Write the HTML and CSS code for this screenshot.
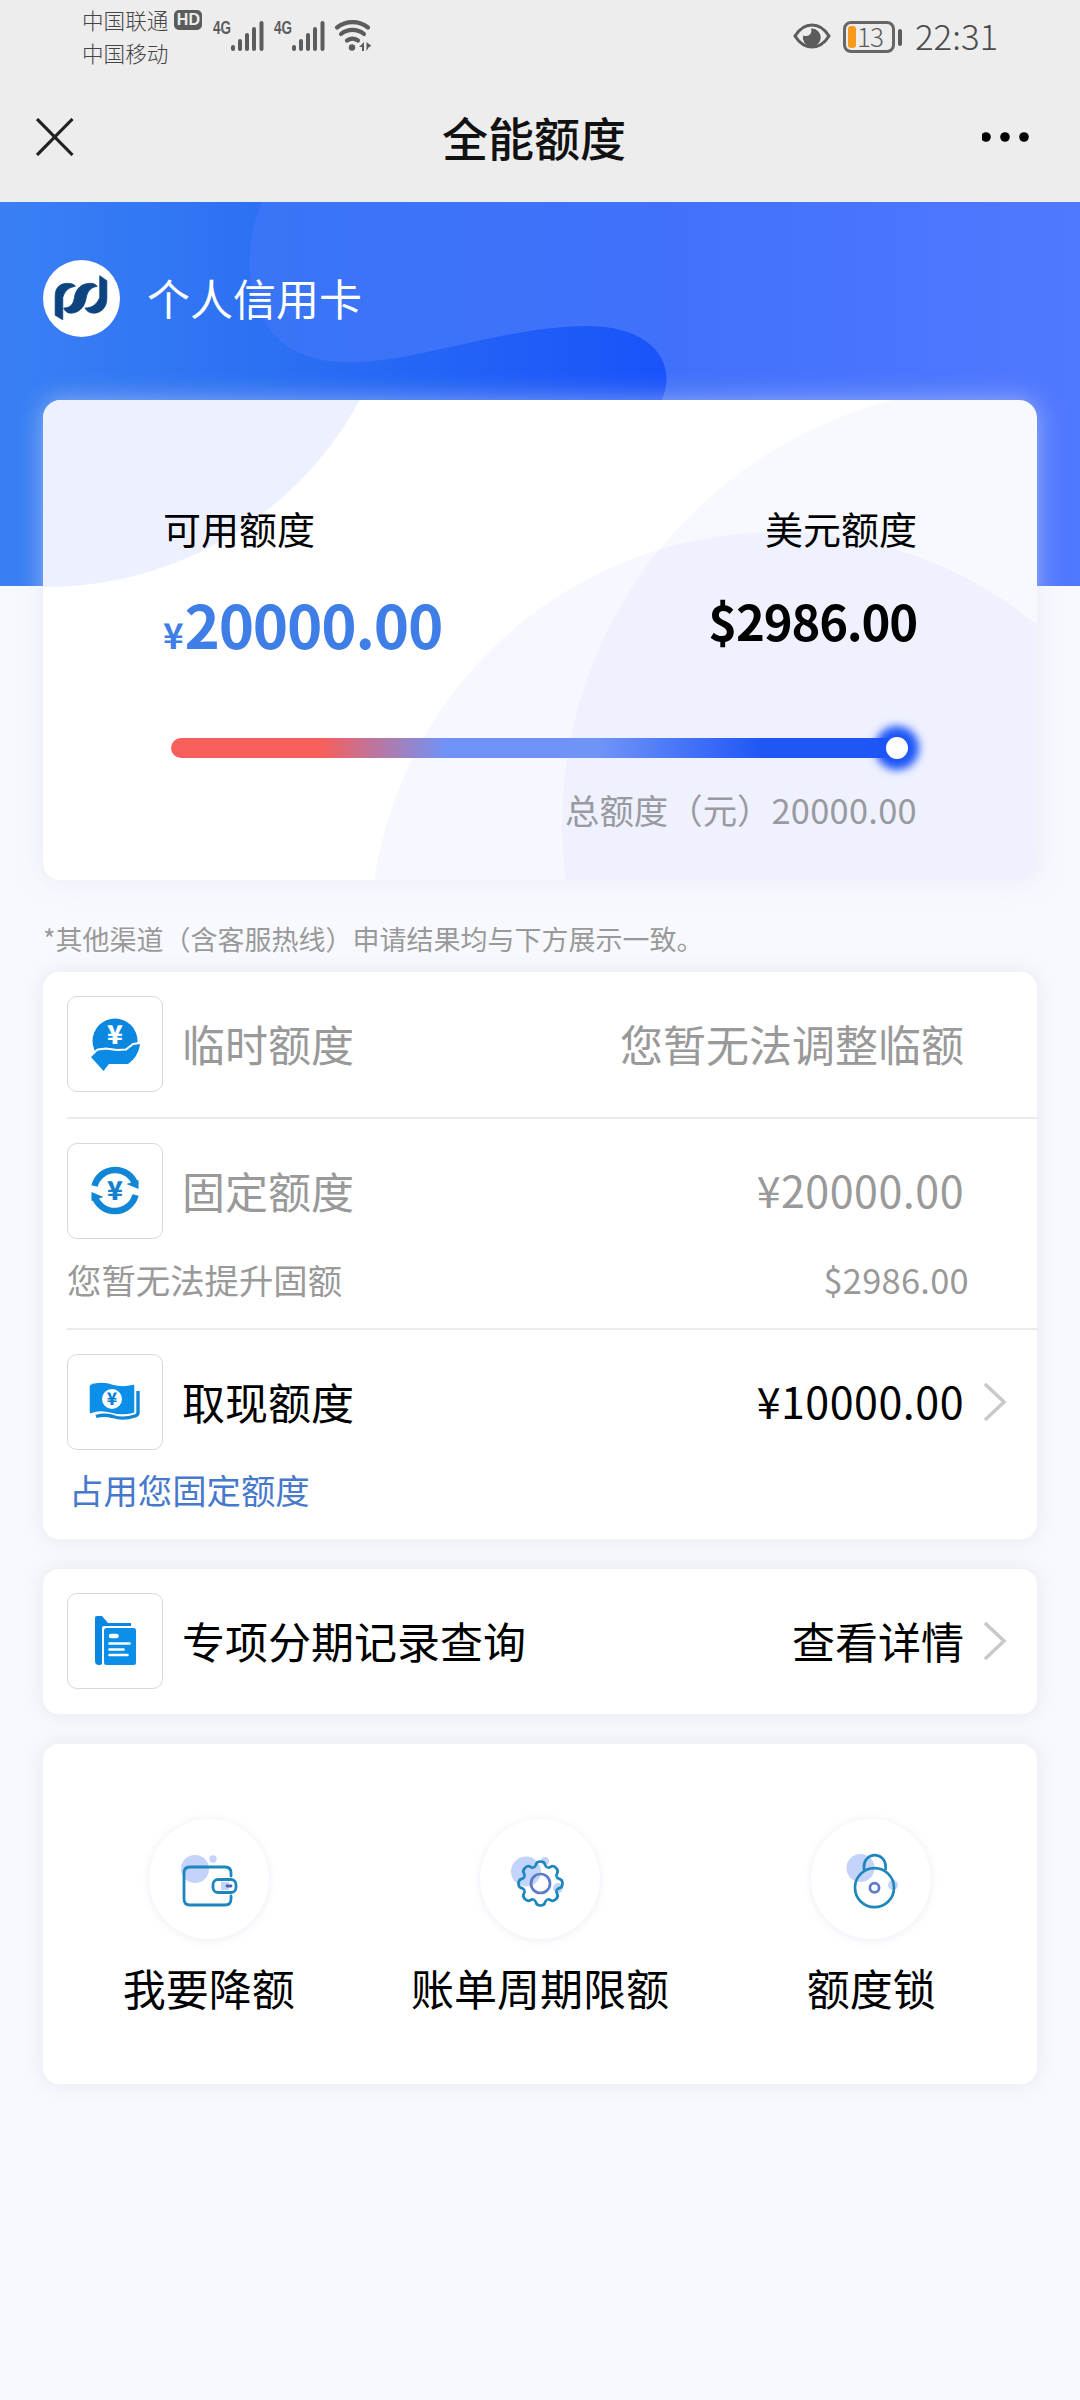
FILE: index.html
```html
<!DOCTYPE html>
<html lang="zh-CN">
<head>
<meta charset="utf-8">
<title>全能额度</title>
<link rel="stylesheet" href="styles.css">
</head>
<body>
<header class="top">
  <div class="status">
    <div class="carriers">
      <div class="carrier">中国联通<span class="hd">HD</span></div>
      <div class="carrier">中国移动</div>
    </div>
    <svg class="signal" width="162" height="36" viewBox="0 0 162 36">
      <g fill="#5c5c5c">
        <g id="sig">
          <text x="0" y="16" textLength="18" lengthAdjust="spacingAndGlyphs" class="net">4G</text>
          <g stroke="#5c5c5c" stroke-width="4" stroke-linecap="round">
            <path d="M20 31v-2M27 31v-8M34 31V17M41 31V11M48.500 31V5"/>
          </g>
        </g>
        <use href="#sig" x="61"/>
      </g>
      <g fill="none" stroke="#5c5c5c" stroke-width="4.200" stroke-linecap="round">
        <path d="M124 9.500a25 25 0 0 1 31 0"/>
        <path d="M128 16a18 18 0 0 1 23 0"/>
        <path d="M134 22.500a9.500 9.500 0 0 1 11 0"/>
      </g>
      <circle cx="139" cy="29.500" r="3.200" fill="#5c5c5c"/>
      <path d="M151 24v9h-2v-4l-3 0zM153.500 33v-9l5 4-2.500 1z" fill="#5c5c5c"/>
    </svg>
    <svg class="eye" width="40" height="30" viewBox="0 0 40 30">
      <path d="M3 15C8 7 14 4 20 4s12 3 17 11c-5 8-11 11-17 11S8 23 3 15z" fill="none" stroke="#5c5c5c" stroke-width="3"/>
      <path d="M19 7.500a9 9 0 1 1-8 7c4 2 10-1 8-7z" fill="#5c5c5c"/>
    </svg>
    <div class="battery"><span class="level"></span><span class="pct">13</span></div>
    <span class="tip"></span>
    <time class="clock">22:31</time>
  </div>
  <nav class="nav">
    <svg width="38" height="38" viewBox="0 0 38 38"><path d="M1 1l35.500 36M36.500 1L1 37" stroke="#222" stroke-width="3.200"/></svg>
    <h1 class="title">全能额度</h1>
    <svg width="48" height="12" viewBox="0 0 48 12"><circle cx="4" cy="6" r="4.800"/><circle cx="23" cy="6" r="4.800"/><circle cx="42" cy="6" r="4.800"/></svg>
  </nav>
</header>

<main>
  <section class="hero">
    <svg class="hero-wave" width="1080" height="384" viewBox="0 202 1080 384">
      <defs>
        <linearGradient id="wave" gradientUnits="userSpaceOnUse" x1="250" y1="0" x2="1080" y2="0">
          <stop offset="0" stop-color="#3975f6"/><stop offset=".5" stop-color="#4171fb"/><stop offset="1" stop-color="#5179ff"/>
        </linearGradient>
      </defs>
      <path d="M262 202C236 264 246 358 340 362 410 366 500 326 588 326 648 326 680 360 661 402V586h419V202z" fill="url(#wave)"/>
    </svg>
    <div class="brand">
      <svg width="77" height="77" viewBox="0 0 76 76">
        <circle cx="38" cy="38" r="38" fill="#fff"/>
        <g fill="#0d4480" stroke="#0d4480" stroke-width=".8" stroke-linejoin="round">
          <path d="M12 54.500V36C12 27 17 23 24 23c4 0 7 1 8 3-6 1-10.500 4-12.500 11v22z"/>
          <path d="M20.500 47.500C27 47 30 44 31 37 32.500 28 38 23 47 23c3 0 5 1 6.500 3-6 1-9.500 4-11 12C41 47 35 52.500 27 52.500c-3 0-5.500-2-6.500-5z"/>
          <path d="M41.500 47.500C49 47 53 44 56 37V15.500l7 5v17.500c0 9-6 14.500-13 14.500-4 0-7-2-8.500-5z"/>
        </g>
      </svg>
      <span>个人信用卡</span>
    </div>
    <div class="quota">
      <svg class="quota-bg" width="994" height="480" viewBox="43 400 994 480">
        <circle cx="46" cy="230" r="357" fill="#edf1ff"/>
        <circle cx="778" cy="940" r="408" fill="#5f78ff" fill-opacity=".06"/>
        <circle cx="1000" cy="825" r="438" fill="#5f78ff" fill-opacity=".042"/>
      </svg>
      <div class="amounts">
        <div class="amount"><span class="label">可用额度</span><strong class="cny"><small>¥</small>20000.00</strong></div>
        <div class="amount right"><span class="label">美元额度</span><strong class="usd">$2986.00</strong></div>
      </div>
      <div class="track"><span class="thumb"></span></div>
      <div class="total">总额度（元）<span class="fig">20000.00</span></div>
    </div>
  </section>

  <p class="note">*其他渠道（含客服热线）申请结果均与下方展示一致。</p>

  <section class="card">
    <div class="item muted">
      <div class="row">
        <span class="tile"><svg width="94" height="94" viewBox="1 1 94 94">
          <circle cx="48" cy="45" r="22.500" fill="#0b87e0"/>
          <path d="M24 61l7-6.500 8-1.500 11 1.500 9-.5 7-5.500 7-1c-.5 7-4 15-12 20.500H42L36.500 75z" fill="#0b8ae6"/>
          <path d="M26 57l5-3.500 8-1 11 1.500 9-.5 7-5.500 7-1" fill="none" stroke="#fff" stroke-width="2"/>
          <text x="48" y="48" class="yen yen-lg" fill="#fff">¥</text>
        </svg></span>
        <span class="name">临时额度</span><span class="value">您暂无法调整临额</span>
      </div>
    </div>
    <div class="item muted">
      <div class="row">
        <span class="tile"><svg width="94" height="94" viewBox="1 1 94 94">
          <g id="swap"><path d="M27.500 43A21.300 21.300 0 0 1 68.500 42" fill="none" stroke="#1186d6" stroke-width="6.500"/><path d="M59.500 41L71.500 46V37z" fill="#1186d6"/></g>
          <use href="#swap" transform="rotate(180 48 47.500)"/>
          <text x="48" y="57" class="yen yen-lg" fill="#1580cc">¥</text>
        </svg></span>
        <span class="name">固定额度</span><span class="value fig-lg">¥20000.00</span>
      </div>
      <div class="sub"><span>您暂无法提升固额</span><span class="fig">$2986.00</span></div>
    </div>
    <div class="item">
      <div class="row">
        <span class="tile"><svg width="94" height="94" viewBox="1 1 94 94">
          <path d="M23.500 32q2-2 5-2c8-1 13 0 17 1.500 7 2 13 2 21 0V58c-9 2.500-15 2-22 0-7-2-14-2.500-21 .5z" fill="#0b8fe8" stroke="#0b8fe8" stroke-width="1.500" stroke-linejoin="round"/>
          <path d="M71 37v22q0 2-3 3c-9 3-15 3-22 .5-7-2-11-2-17 0" fill="none" stroke="#1186d6" stroke-width="3.400"/>
          <circle cx="45" cy="45" r="10" fill="#fff"/>
          <text x="45" y="51" class="yen yen-sm" fill="#0b7fd6">¥</text>
        </svg></span>
        <span class="name">取现额度</span><span class="value fig-lg">¥10000.00</span>
        <svg class="chevron" width="24" height="40" viewBox="0 0 24 40"><path d="M2 2l19 18L2 38" fill="none" stroke="#c9c9c9" stroke-width="3.600"/></svg>
      </div>
      <a class="link">占用您固定额度</a>
    </div>
  </section>

  <section class="card">
    <div class="item">
      <div class="row">
        <span class="tile"><svg width="94" height="94" viewBox="1 1 94 94">
          <path d="M28 25q0-2 2-2h5l6 7h23v3H37q-2 0-2 2v35q0 2-3 2-4 0-4-4z" fill="#0a86e0"/>
          <rect x="37" y="35" width="32" height="37" rx="2.500" fill="#0b8fe8"/>
          <path d="M42.500 50.500h20M42.500 56.500h14M42.500 62h18" stroke="#fff" stroke-width="2.600" stroke-linecap="round"/>
          <path d="M44 43h5.500" stroke="#fff" stroke-width="4.500" stroke-linecap="round"/>
        </svg></span>
        <span class="name">专项分期记录查询</span><span class="value">查看详情</span>
        <svg class="chevron" width="24" height="40" viewBox="0 0 24 40"><path d="M2 2l19 18L2 38" fill="none" stroke="#c9c9c9" stroke-width="3.600"/></svg>
      </div>
    </div>
  </section>

  <section class="card tools">
    <div class="tool">
      <svg class="disc" width="120" height="120" viewBox="0 0 120 120" fill="none" stroke="#1c86bd" stroke-width="2.800" stroke-linecap="round">
        <g fill="#c3d3fa" stroke="none"><circle cx="46" cy="50" r="14"/><circle cx="64" cy="40" r="3.700"/></g>
        <path d="M82 57v-3q0-6-6-6H41q-6 0-6 6v26q0 6 6 6h35q6 0 6-6v-3"/>
        <rect x="64" y="60.500" width="23" height="13" rx="5"/>
        <path d="M72 63h8v8h-8z" fill="#c3d3fa" stroke="none"/>
        <path d="M78 67h4" stroke="#4a62b0"/>
      </svg>
      <span>我要降额</span>
    </div>
    <div class="tool">
      <svg class="disc" width="120" height="120" viewBox="0 0 120 120" fill="none" stroke="#1c86bd" stroke-width="2.700">
        <g fill="#c3d3fa" stroke="none"><circle cx="46" cy="52.500" r="15"/><circle cx="65" cy="42" r="4"/><circle cx="78" cy="69" r="5"/></g>
        <g transform="translate(60.500 64.500)">
          <path id="tooth" d="M-6.700-16.200Q-5-16.900-4.600-18.800-4-22 0-22 4-22 4.600-18.800 5-16.900 6.700-16.200"/>
          <use href="#tooth" transform="rotate(45)"/><use href="#tooth" transform="rotate(90)"/><use href="#tooth" transform="rotate(135)"/><use href="#tooth" transform="rotate(180)"/><use href="#tooth" transform="rotate(225)"/><use href="#tooth" transform="rotate(270)"/><use href="#tooth" transform="rotate(315)"/>
          <circle r="9.500" stroke="#5b7cc8"/>
        </g>
      </svg>
      <span>账单周期限额</span>
    </div>
    <div class="tool">
      <svg class="disc" width="120" height="120" viewBox="0 0 120 120" fill="none" stroke="#1c86bd" stroke-width="2.700">
        <g fill="#c3d3fa" stroke="none"><circle cx="49.500" cy="49" r="14"/><circle cx="82" cy="66" r="5"/></g>
        <circle cx="63.500" cy="68.700" r="19.500"/>
        <path d="M53 51v-4a10.800 10.800 0 0 1 21.600 0v4"/>
        <circle cx="63.500" cy="68.700" r="4.600" stroke="#5b7cc8"/>
      </svg>
      <span>额度锁</span>
    </div>
  </section>
</main>
</body>
</html>
```
FILE: styles.css
```css
* { box-sizing: border-box; }
body {
  margin: 0;
  width: 1080px;
  min-height: 2400px;
  background: #f8f9fe;
  color: #000;
  font-family: "Noto Sans CJK SC", sans-serif;
}
svg { display: block; flex: none; }

/* status bar and title */
.top { height: 202px; background: #ededed; }
.status { display: flex; height: 74px; padding: 0 84px 0 82px; color: #5c5c5c; }
.carriers { width: 131px; padding-top: 3px; }
.carrier { display: flex; align-items: center; height: 33px; font-size: 21.600px; font-weight: 300; color: #444; white-space: nowrap; }
.hd {
  margin-left: 6px; width: 28px; height: 20px; border-radius: 5px;
  background: #5c5c5c; color: #ededed;
  font: 700 16px/20px "Liberation Sans", sans-serif; text-align: center;
}
.signal { margin-top: 18px; }
.net { font: 700 19px "Liberation Sans", sans-serif; }
.eye { margin: 21px 11px 0 auto; }
.battery {
  display: flex; align-items: center; gap: 1px; width: 52px; height: 32px; margin-top: 21px; padding-left: 2px;
  border: 3px solid #666; border-radius: 8px;
}
.level { width: 8px; height: 22px; border-radius: 3px; background: #f79a1e; }
.pct { margin-top: -2px; font-size: 26px; font-weight: 300; line-height: 24px; letter-spacing: -1px; }
.tip { width: 4px; height: 17px; margin: 29px 13px 0 3px; border-radius: 2px; background: #5c5c5c; }
.clock { width: 81px; margin-top: 11px; font-size: 34.800px; line-height: 48px; font-weight: 300; color: #4c4c4c; white-space: nowrap; }
.nav { display: flex; align-items: center; justify-content: space-between; height: 128px; padding: 0 50px 2px 36px; }
.title { margin: -2px 0 0 12px; font-size: 46px; line-height: 60px; font-weight: 500; color: #111; }

/* hero */
.hero {
  position: relative; height: 384px; padding: 58px 43px 0;
  background: linear-gradient(90deg, #3a80f4 0, #2c70f3 270px, #1a53fa 665px, #4f75ff 1080px);
}
.hero-wave { position: absolute; left: 0; top: 0; }
.brand { position: relative; display: flex; align-items: center; gap: 27px; height: 76px; color: #fff; font-size: 43px; line-height: 60px; }
.brand span { margin-top: -3px; }
.quota {
  position: relative; height: 480px; margin-top: 64px; padding: 102px 120px 0;
  border-radius: 18px; background: #fff; box-shadow: 0 0 26px rgba(222, 225, 240, .55); overflow: hidden;
}
.quota-bg { position: absolute; left: 0; top: 0; }
.amounts { position: relative; display: flex; justify-content: space-between; }
.amount { display: flex; flex-direction: column; }
.right { align-items: flex-end; }
.label { height: 52px; font-size: 38px; line-height: 52px; }
.cny, .usd { display: flex; align-items: baseline; height: 80px; margin-top: 29px; line-height: 80px; font-weight: 700; }
.cny { font-size: 60px; color: #3e7ee6; letter-spacing: -1.200px; }
.cny small { margin-right: 2px; font-size: 35px; }
.usd { font-size: 49px; margin-top: 26px; letter-spacing: -1.200px; }
.track {
  position: relative; display: flex; justify-content: flex-end; align-items: center;
  width: 738px; height: 20px; margin: 75px 0 0 8px; border-radius: 10px;
  background: linear-gradient(90deg, #f75f5a 0, #f75f5a 150px, #6f93f8 275px, #6f93f8 430px, #1f57f5 590px);
}
.thumb { width: 22px; height: 22px; margin-right: 1px; border-radius: 50%; background: #fff; box-shadow: 0 0 9px 11px #1d55f7; }
.total { position: relative; margin-top: 28px; font-size: 34.400px; line-height: 46px; color: #999aa0; text-align: right; }
.fig { letter-spacing: .3px; }
.fig-lg { margin-top: -4px; letter-spacing: .5px; }

.note { margin: 335px 43px 0; height: 51px; font-size: 27px; line-height: 36px; color: #999; }

/* cards */
.card { margin: 0 43px 30px; border-radius: 16px; background: #fff; box-shadow: 0 0 20px rgba(200, 204, 215, .38); }
.item { margin-left: 24px; padding: 24px 0 25px; }
.item + .item { border-top: 2px solid #ebebeb; }
.row { display: flex; align-items: center; height: 96px; padding-right: 30px; font-size: 43px; line-height: 60px; }
.tile { display: block; width: 96px; height: 96px; border: 1px solid #d8d8d8; border-radius: 10px; }
.name { margin: -2px 0 0 19px; }
.value { margin: -2px 43px 0 auto; }
.value.fig-lg { margin-top: -5px; }
.chevron { margin: 0 0 0 -24px; }
.muted { color: #999; }
.sub { display: flex; justify-content: space-between; height: 88px; margin-bottom: -24px; padding: 17px 68px 0 0; font-size: 34.400px; line-height: 46px; }
.link { display: block; height: 64px; padding: 16px 0 0 2px; font-size: 34.400px; line-height: 46px; color: #4679cc; }
.yen { font-family: "Noto Sans CJK SC", sans-serif; font-weight: 900; text-anchor: middle; }
.yen-lg { font-size: 26px; }
.yen-sm { font-size: 17px; }
.tools { display: grid; grid-template-columns: repeat(3, 1fr); height: 340px; padding-top: 75px; }
.tool { display: flex; flex-direction: column; align-items: center; gap: 16px; font-size: 43px; line-height: 64px; }
.disc { border-radius: 50%; background: #fff; box-shadow: 0 1px 8px rgba(150, 160, 210, .2); }
```
